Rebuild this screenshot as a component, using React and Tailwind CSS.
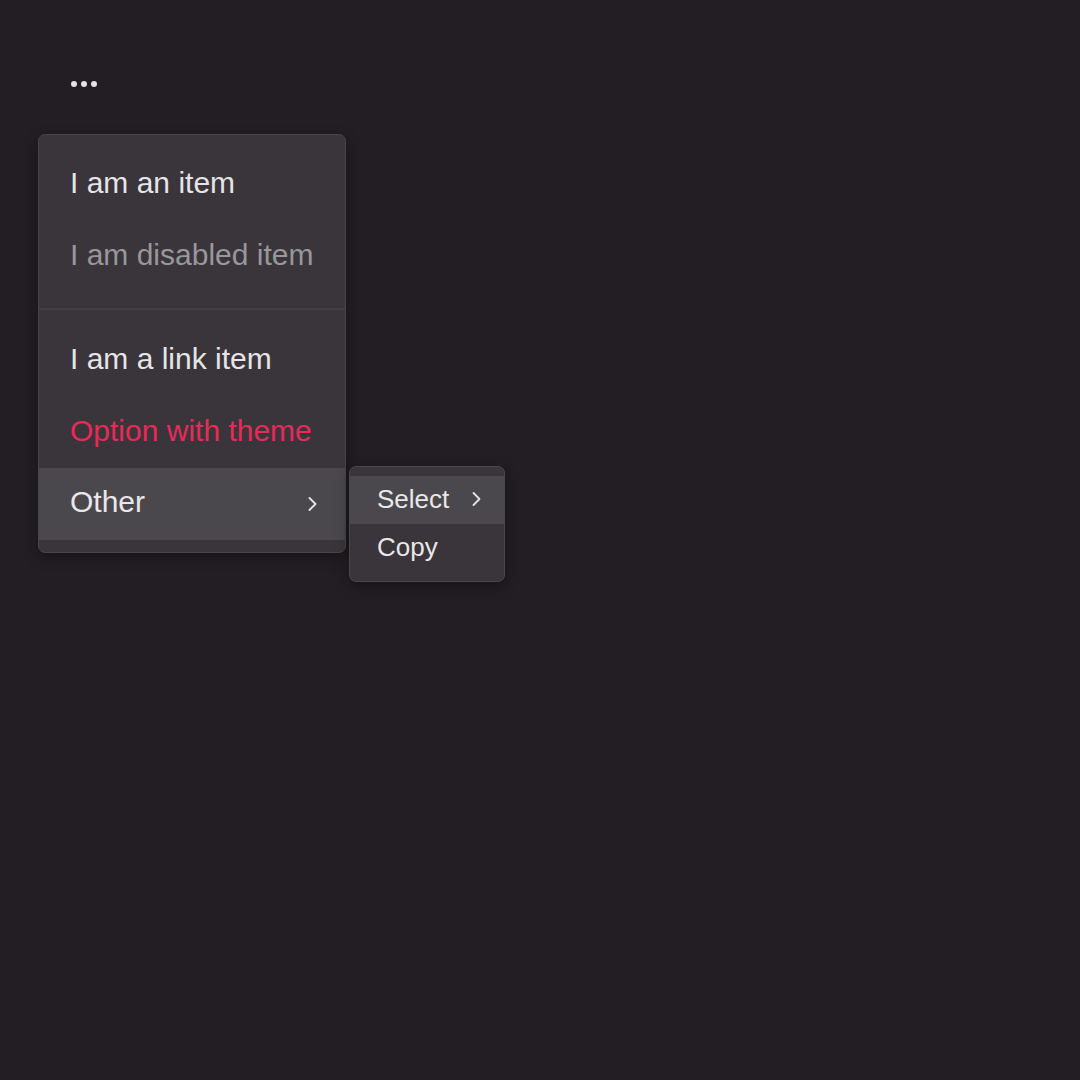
import React from "react";

function Chevron({ className }) {
  return (
    <svg
      width="24"
      height="24"
      viewBox="0 0 24 24"
      fill="none"
      stroke="currentColor"
      strokeWidth="1.8"
      strokeLinecap="round"
      strokeLinejoin="round"
      className={className}
    >
      <path d="m9.5 18 6-6-6-6" />
    </svg>
  );
}

export default function App() {
  const font = { fontFamily: '"Liberation Sans", Arial, sans-serif' };
  return (
    <div className="min-h-screen w-full bg-[#221e23]" style={font}>
      <div className="pl-[38px] pt-[81px]">
        <div className="ml-[33px] flex h-[6px] gap-[4px]">
          <span className="h-[6px] w-[6px] rounded-full bg-[#e4e2e5]" />
          <span className="h-[6px] w-[6px] rounded-full bg-[#e4e2e5]" />
          <span className="h-[6px] w-[6px] rounded-full bg-[#e4e2e5]" />
        </div>

        <div className="relative mt-[47px] w-[308px] rounded-[7px] border border-[#48444a] bg-[#39353a] py-[12px] shadow-[0_4px_14px_rgba(0,0,0,0.35)]">
          <div className="flex h-[72px] items-center pb-[2px] pl-[31px] text-[30px] text-[#e6e4e7]">
            I am an item
          </div>
          <div className="flex h-[72px] items-center pb-[2px] pl-[31px] text-[30px] text-[#9a979b]">
            I am disabled item
          </div>
          <div className="mb-[14px] mt-[17px] h-[2px] bg-[#443f45]" />
          <div className="flex h-[72px] items-center pb-[3px] pl-[31px] text-[30px] text-[#e6e4e7]">
            I am a link item
          </div>
          <div className="flex h-[72px] items-center pb-[3px] pl-[31px] text-[30px] text-[#e52b5a]">
            Option with theme
          </div>
          <div className="flex h-[72px] items-center justify-between bg-[#4b484d] pb-[5px] pl-[31px] pr-[21px] text-[30px] text-[#e9e7ea]">
            <span>Other</span>
            <Chevron className="mt-[5px] text-[#e6e4e7]" />
          </div>

          <div className="absolute left-[310px] top-[331px] w-[156px] rounded-[7px] border border-[#4a464c] bg-[#39353a] py-[9px] shadow-[0_4px_14px_rgba(0,0,0,0.35)]">
            <div className="flex h-[48px] items-center justify-between bg-[#4b484d] pb-[2px] pl-[27px] pr-[16px] text-[26px] text-[#e9e7ea]">
              <span>Select</span>
              <Chevron className="text-[#e6e4e7]" />
            </div>
            <div className="flex h-[48px] items-center pb-[2px] pl-[27px] text-[26px] text-[#e9e7ea]">
              Copy
            </div>
          </div>
        </div>
      </div>
    </div>
  );
}
